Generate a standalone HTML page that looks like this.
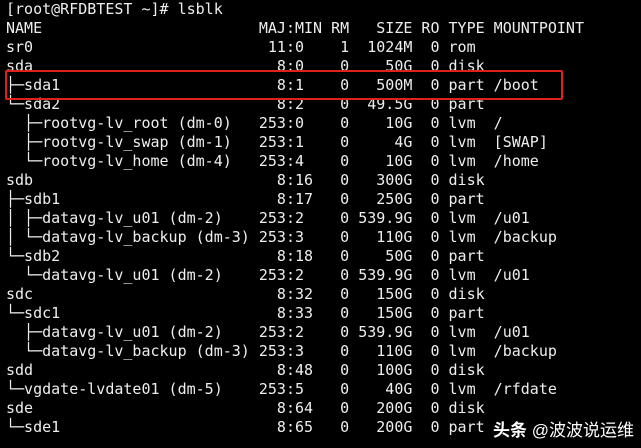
<!DOCTYPE html>
<html><head><meta charset="utf-8"><style>
html,body{margin:0;padding:0;background:#000;width:641px;height:448px;overflow:hidden;position:relative}
pre{margin:0;position:absolute;left:6px;top:0;font-family:"DejaVu Sans Mono","Liberation Mono",monospace;font-size:15px;line-height:19px;color:#eeeeee;letter-spacing:0}
.box{position:absolute;left:5px;top:70px;width:554px;height:26px;border:2.5px solid #e0201c;border-radius:2px}
.wm{position:absolute;left:493px;top:416px;font-family:"Liberation Sans","Noto Sans CJK SC",sans-serif;font-size:17px;color:#fff;font-weight:bold;white-space:nowrap}
.wm span{font-weight:normal}
</style></head><body>
<pre>[root@RFDBTEST ~]# lsblk
NAME                        MAJ:MIN RM   SIZE RO TYPE MOUNTPOINT
sr0                          11:0    1  1024M  0 rom  
sda                           8:0    0    50G  0 disk 
├─sda1                        8:1    0   500M  0 part /boot
└─sda2                        8:2    0  49.5G  0 part 
  ├─rootvg-lv_root (dm-0)   253:0    0    10G  0 lvm  /
  ├─rootvg-lv_swap (dm-1)   253:1    0     4G  0 lvm  [SWAP]
  └─rootvg-lv_home (dm-4)   253:4    0    10G  0 lvm  /home
sdb                           8:16   0   300G  0 disk 
├─sdb1                        8:17   0   250G  0 part 
│ ├─datavg-lv_u01 (dm-2)    253:2    0 539.9G  0 lvm  /u01
│ └─datavg-lv_backup (dm-3) 253:3    0   110G  0 lvm  /backup
└─sdb2                        8:18   0    50G  0 part 
  └─datavg-lv_u01 (dm-2)    253:2    0 539.9G  0 lvm  /u01
sdc                           8:32   0   150G  0 disk 
└─sdc1                        8:33   0   150G  0 part 
  ├─datavg-lv_u01 (dm-2)    253:2    0 539.9G  0 lvm  /u01
  └─datavg-lv_backup (dm-3) 253:3    0   110G  0 lvm  /backup
sdd                           8:48   0   100G  0 disk 
└─vgdate-lvdate01 (dm-5)    253:5    0    40G  0 lvm  /rfdate
sde                           8:64   0   200G  0 disk 
└─sde1                        8:65   0   200G  0 part </pre>
<div class="box"></div>
<div class="wm">头条 <span>@波波说运维</span></div>
</body></html>
